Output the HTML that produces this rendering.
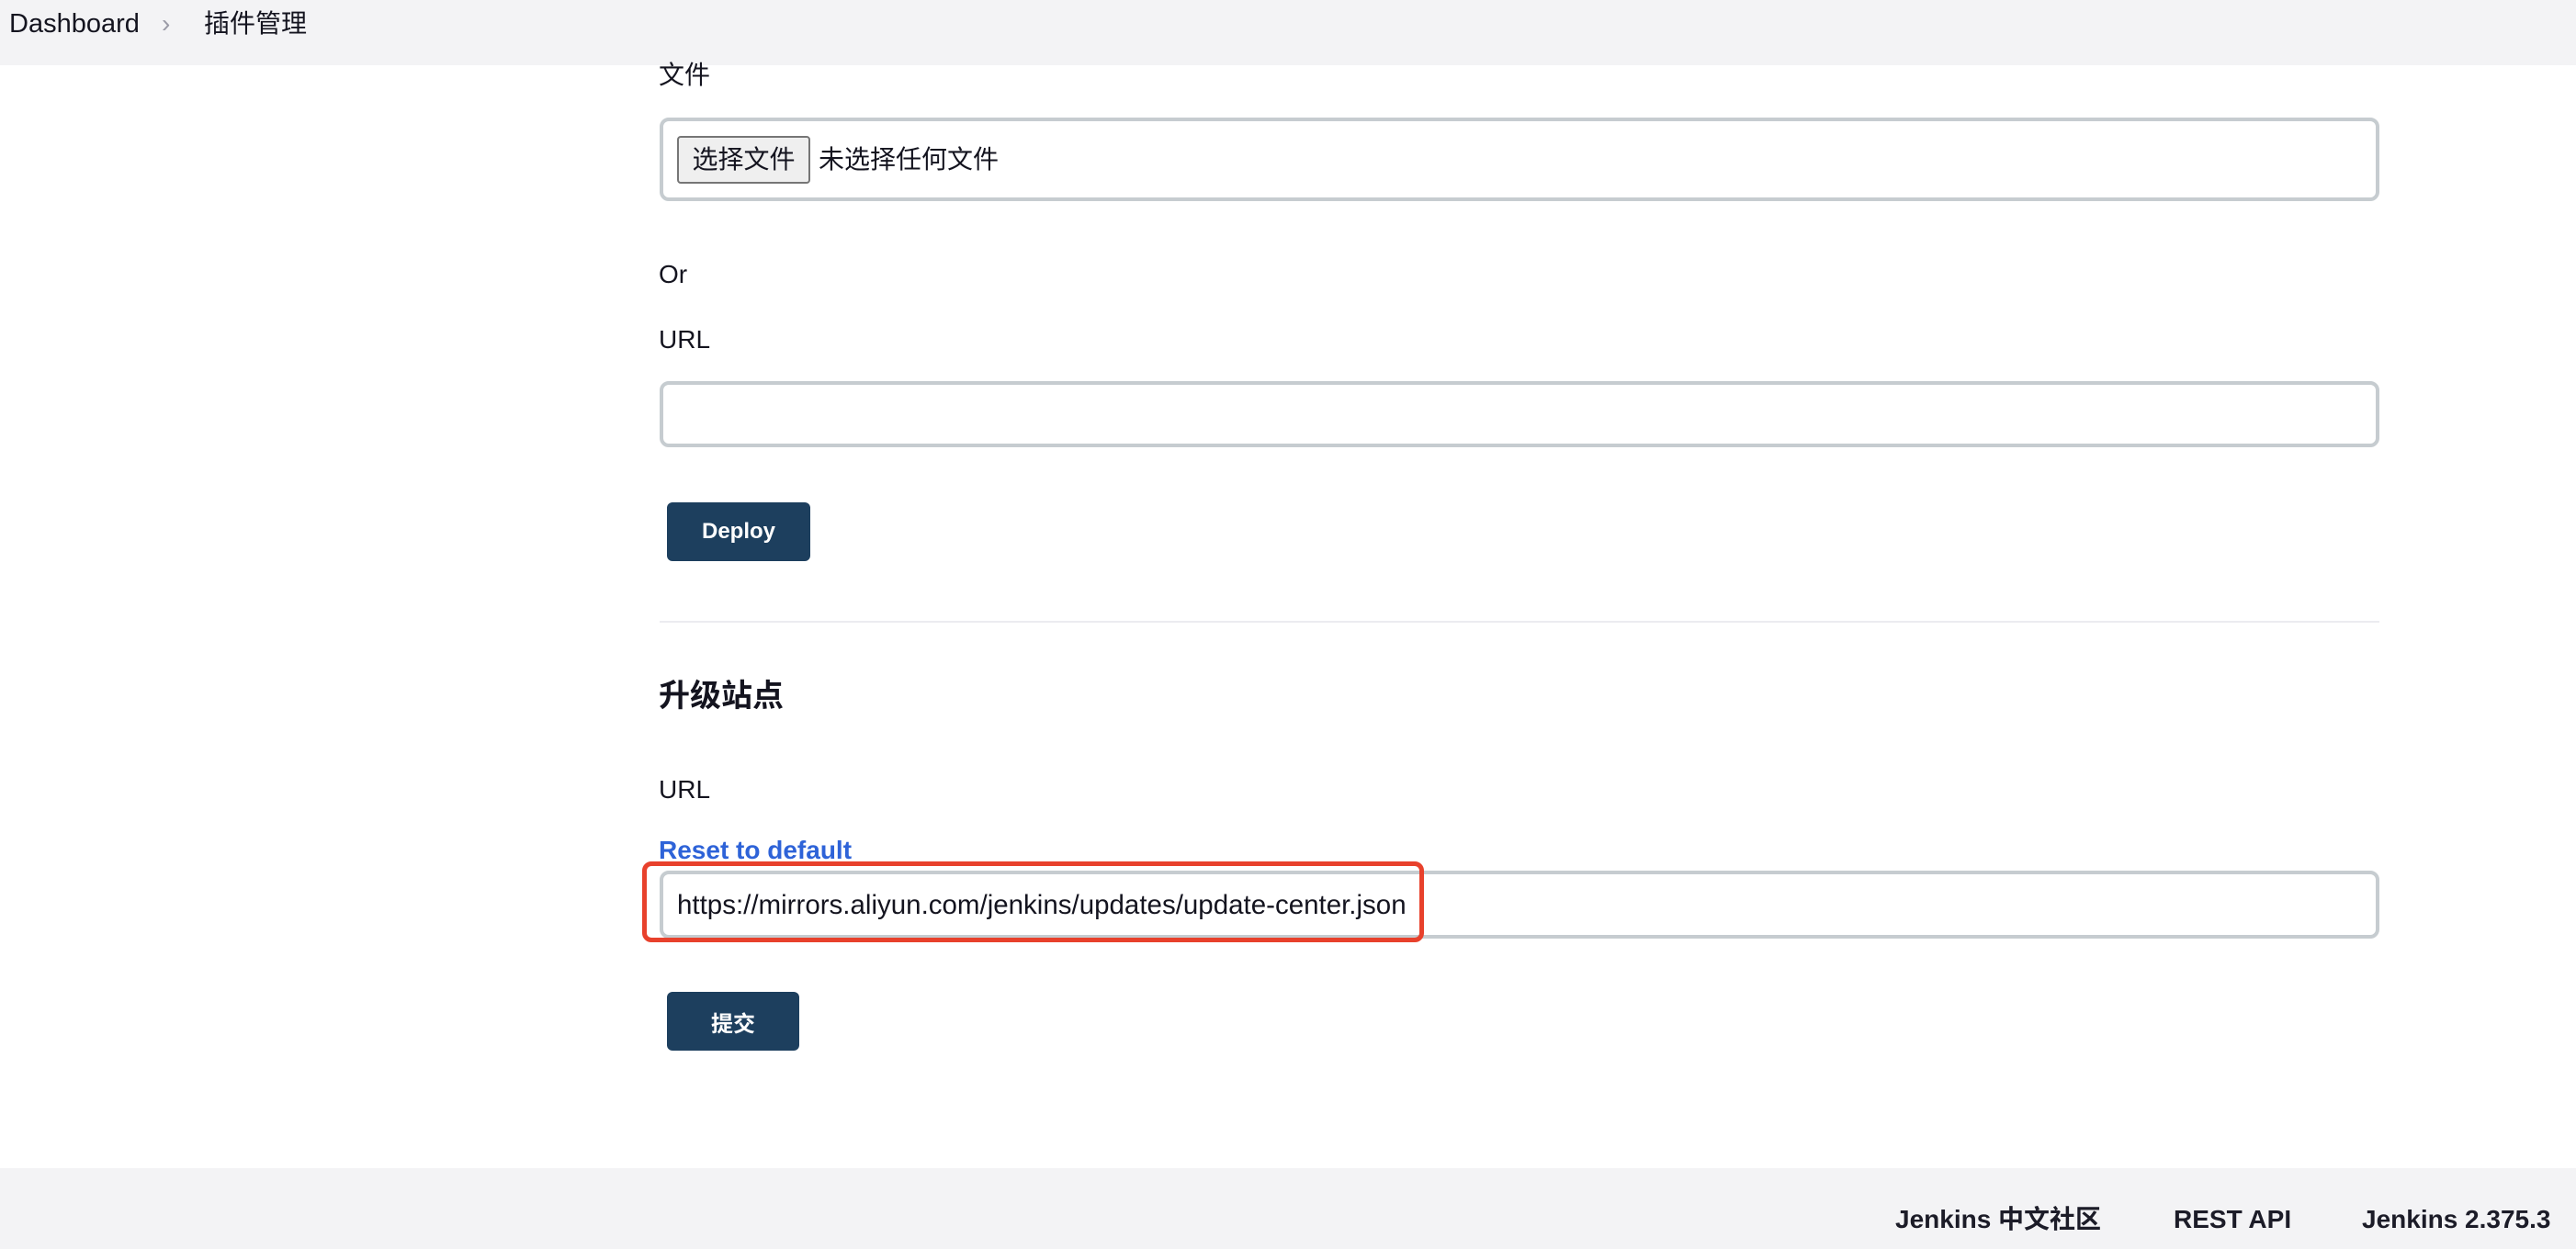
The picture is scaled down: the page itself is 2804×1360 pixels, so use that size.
<!DOCTYPE html>
<html><head><meta charset="utf-8"><style>
*{margin:0;padding:0;box-sizing:border-box}
body{width:2804px;height:1360px;position:relative;background:#fff;font-family:"Liberation Sans","Noto Sans CJK SC",sans-serif;color:#14141f;overflow:hidden}
.a{position:absolute;white-space:nowrap}
.t{font-size:28px;line-height:40px}
.box{position:absolute;border:4px solid #c6ccd0;border-radius:10px;background:#fff}
.btn{position:absolute;background:#1d3f5e;border-radius:6px;color:#fff;font-weight:bold;font-size:24px;display:flex;align-items:center;justify-content:center}
</style></head><body>
<div class="a" style="left:0;top:0;width:2804px;height:71px;background:#f3f3f5"></div>
<div class="a" style="left:10px;top:6px;font-size:29px;line-height:40px">Dashboard</div>
<div class="a" style="left:176px;top:6px;font-size:28px;line-height:40px;color:#9a9aa6">›</div>
<div class="a t" style="left:222px;top:6px">插件管理</div>

<div class="a t" style="left:717px;top:62px">文件</div>
<div class="box" style="left:718px;top:128px;width:1872px;height:91px"></div>
<div class="a" style="left:737px;top:148px;width:145px;height:52px;background:#efefef;border:2px solid #767676;border-radius:4px;font-size:28px;line-height:48px;text-align:center">选择文件</div>
<div class="a t" style="left:891px;top:154px">未选择任何文件</div>

<div class="a t" style="left:717px;top:279px">Or</div>
<div class="a t" style="left:717px;top:350px">URL</div>
<div class="box" style="left:718px;top:415px;width:1872px;height:72px"></div>
<div class="btn" style="left:726px;top:547px;width:156px;height:64px">Deploy</div>

<div class="a" style="left:718px;top:676px;width:1872px;height:2px;background:#ececf0"></div>
<div class="a" style="left:717px;top:738px;font-size:34px;font-weight:bold;line-height:40px">升级站点</div>
<div class="a t" style="left:717px;top:840px">URL</div>
<div class="a" style="left:717px;top:906px;font-size:28px;line-height:40px;color:#2e63d8;font-weight:bold">Reset to default</div>
<div class="box" style="left:718px;top:948px;width:1872px;height:74px"></div>
<div class="a" style="left:737px;top:966px;font-size:29.5px;line-height:40px">https://mirrors.aliyun.com/jenkins/updates/update-center.json</div>
<div class="a" style="left:699px;top:938px;width:851px;height:88px;border:5px solid #e8412c;border-radius:10px"></div>
<div class="btn" style="left:726px;top:1080px;width:144px;height:64px">提交</div>

<div class="a" style="left:0;top:1272px;width:2804px;height:88px;background:#f3f3f5"></div>
<div class="a" style="left:2063px;top:1308px;font-size:28px;line-height:40px;font-weight:bold;color:#1c1c28">Jenkins 中文社区</div>
<div class="a" style="left:2366px;top:1308px;font-size:28px;line-height:40px;font-weight:bold;color:#1c1c28">REST API</div>
<div class="a" style="left:2571px;top:1308px;font-size:28px;line-height:40px;font-weight:bold;color:#1c1c28">Jenkins 2.375.3</div>
</body></html>
